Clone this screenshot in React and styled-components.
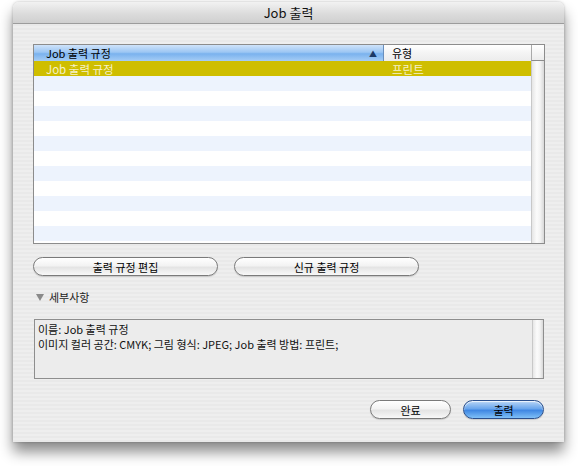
import React from 'react'
import styled, { createGlobalStyle } from 'styled-components'

const Global = createGlobalStyle`
  html, body { margin: 0; padding: 0; background: #fff; }
  body { font-family: "Noto Sans CJK KR", "DejaVu Sans", sans-serif; font-size: 11px; color: #000; }
`

const Stage = styled.div`
  width: 578px;
  height: 466px;
  padding: 2px 0 0 13px;
  box-sizing: border-box;
`

const Window = styled.div`
  width: 551px;
  height: 440px;
  display: flex;
  flex-direction: column;
  border-radius: 6px 6px 0 0;
  background: repeating-linear-gradient(180deg, #eeeeee 0 2px, #e9e9e9 2px 4px);
  box-shadow: 0 10px 14px rgba(0,0,0,0.45), 0 0 3px rgba(0,0,0,0.25);
  overflow: hidden;
`

const TitleBar = styled.div`
  height: 21px;
  flex: none;
  display: flex;
  align-items: center;
  justify-content: center;
  font-size: 13px;
  background: linear-gradient(180deg, #f2f2f2 0%, #dcdcdc 55%, #cfcfcf 100%);
  border-bottom: 1px solid #9c9c9c;
  color: #111;
`

const Body = styled.div`
  flex: 1;
  display: flex;
  flex-direction: column;
  padding: 20px 19px 0 20px;
`

const Table = styled.div`
  width: 512px;
  height: 200px;
  box-sizing: border-box;
  border: 1px solid #8c8c8c;
  display: grid;
  grid-template-columns: 1fr 13px;
  grid-template-rows: 16px 1fr;
  background: #fff;
`

const HeaderRow = styled.div`
  display: grid;
  grid-template-columns: 350px 1fr;
  border-bottom: 1px solid #8c8c8c;
`

const HeaderCell = styled.div`
  display: flex;
  align-items: center;
  justify-content: space-between;
  padding: 0 6px 0 ${p => p.$pad}px;
  font-size: 11px;
  background: ${p => p.$active
    ? 'linear-gradient(180deg, #cfe3fa 0%, #9cc6f3 45%, #7ab2ee 55%, #a6cdf5 100%)'
    : 'linear-gradient(180deg, #ffffff 0%, #f4f4f4 50%, #ececec 100%)'};
  border-right: ${p => (p.$active ? '1px solid #6a8fbd' : 'none')};
`

const SortArrow = styled.span`
  font-size: 8px;
  color: #1c3a66;
`

const Corner = styled.div`
  border-left: 1px solid #aaa;
  border-bottom: 1px solid #8c8c8c;
  background: linear-gradient(180deg, #ffffff 0%, #ececec 100%);
`

const Rows = styled.div`
  overflow: hidden;
`

const Row = styled.div`
  height: 15px;
  display: grid;
  grid-template-columns: 350px 1fr;
  align-items: center;
  font-size: 11.5px;
  color: ${p => (p.$selected ? '#f6f1c8' : '#000')};
  background: ${p => (p.$selected ? '#cfbe00' : p.$odd ? '#edf3fd' : '#ffffff')};
`

const Cell = styled.div`
  padding-left: ${p => p.$pad}px;
  white-space: nowrap;
`

const ScrollTrack = styled.div`
  border-left: 1px solid #c8c8c8;
  background: linear-gradient(90deg, #e6e6e6 0%, #fbfbfb 40%, #f2f2f2 70%, #d8d8d8 100%);
`

const ButtonRow = styled.div`
  display: flex;
  gap: 16px;
  margin-top: 13px;
`

const Pill = styled.button`
  width: ${p => p.$w}px;
  height: 19px;
  border-radius: 10px;
  border: 1px solid ${p => (p.$primary ? '#2a4f8c' : '#7a7a7a')};
  font-family: inherit;
  font-size: 11px;
  padding: 0;
  color: #000;
  background: ${p => p.$primary
    ? 'linear-gradient(180deg, #b9d6f7 0%, #6aa6ec 45%, #3f87e3 55%, #7fc0f7 100%)'
    : 'linear-gradient(180deg, #ffffff 0%, #f3f3f3 45%, #e4e4e4 55%, #f8f8f8 100%)'};
  box-shadow: inset 0 1px 1px rgba(255,255,255,0.8), 0 1px 1px rgba(0,0,0,0.15);
`

const Disclosure = styled.div`
  display: flex;
  align-items: center;
  gap: 5px;
  margin-top: 13px;
  padding-left: 3px;
  font-size: 11px;
  color: #222;
`

const Triangle = styled.span`
  width: 0;
  height: 0;
  border-left: 4px solid transparent;
  border-right: 4px solid transparent;
  border-top: 7px solid #8a8a8a;
`

const Details = styled.div`
  margin-top: 14px;
  margin-left: 1px;
  width: 510px;
  height: 60px;
  box-sizing: border-box;
  border: 1px solid #8e8e8e;
  display: grid;
  grid-template-columns: 1fr 11px;
  background: #ececec;
`

const DetailsText = styled.div`
  padding: 2px 3px;
  line-height: 15px;
  font-size: 11px;
  color: #111;
`

const Footer = styled.div`
  display: flex;
  justify-content: flex-end;
  gap: 12px;
  margin-top: 21px;
  padding-right: 1px;
`

const rows = Array.from({ length: 12 }, (_, i) => i)

export default function App() {
  return (
    <Stage>
      <Global />
      <Window>
        <TitleBar>Job 출력</TitleBar>
        <Body>
          <Table>
            <HeaderRow>
              <HeaderCell $active $pad={12}>
                <span>Job 출력 규정</span>
                <SortArrow>▲</SortArrow>
              </HeaderCell>
              <HeaderCell $pad={8}>유형</HeaderCell>
            </HeaderRow>
            <Corner />
            <Rows>
              {rows.map(i => (
                <Row key={i} $selected={i === 0} $odd={i % 2 === 1}>
                  {i === 0 && (
                    <>
                      <Cell $pad={12}>Job 출력 규정</Cell>
                      <Cell $pad={8}>프린트</Cell>
                    </>
                  )}
                </Row>
              ))}
            </Rows>
            <ScrollTrack />
          </Table>

          <ButtonRow>
            <Pill $w={185}>출력 규정 편집</Pill>
            <Pill $w={185}>신규 출력 규정</Pill>
          </ButtonRow>

          <Disclosure>
            <Triangle />
            <span>세부사항</span>
          </Disclosure>

          <Details>
            <DetailsText>
              이름: Job 출력 규정<br />
              이미지 컬러 공간: CMYK; 그림 형식: JPEG; Job 출력 방법: 프린트;
            </DetailsText>
            <ScrollTrack />
          </Details>

          <Footer>
            <Pill $w={81}>완료</Pill>
            <Pill $w={81} $primary>출력</Pill>
          </Footer>
        </Body>
      </Window>
    </Stage>
  )
}
